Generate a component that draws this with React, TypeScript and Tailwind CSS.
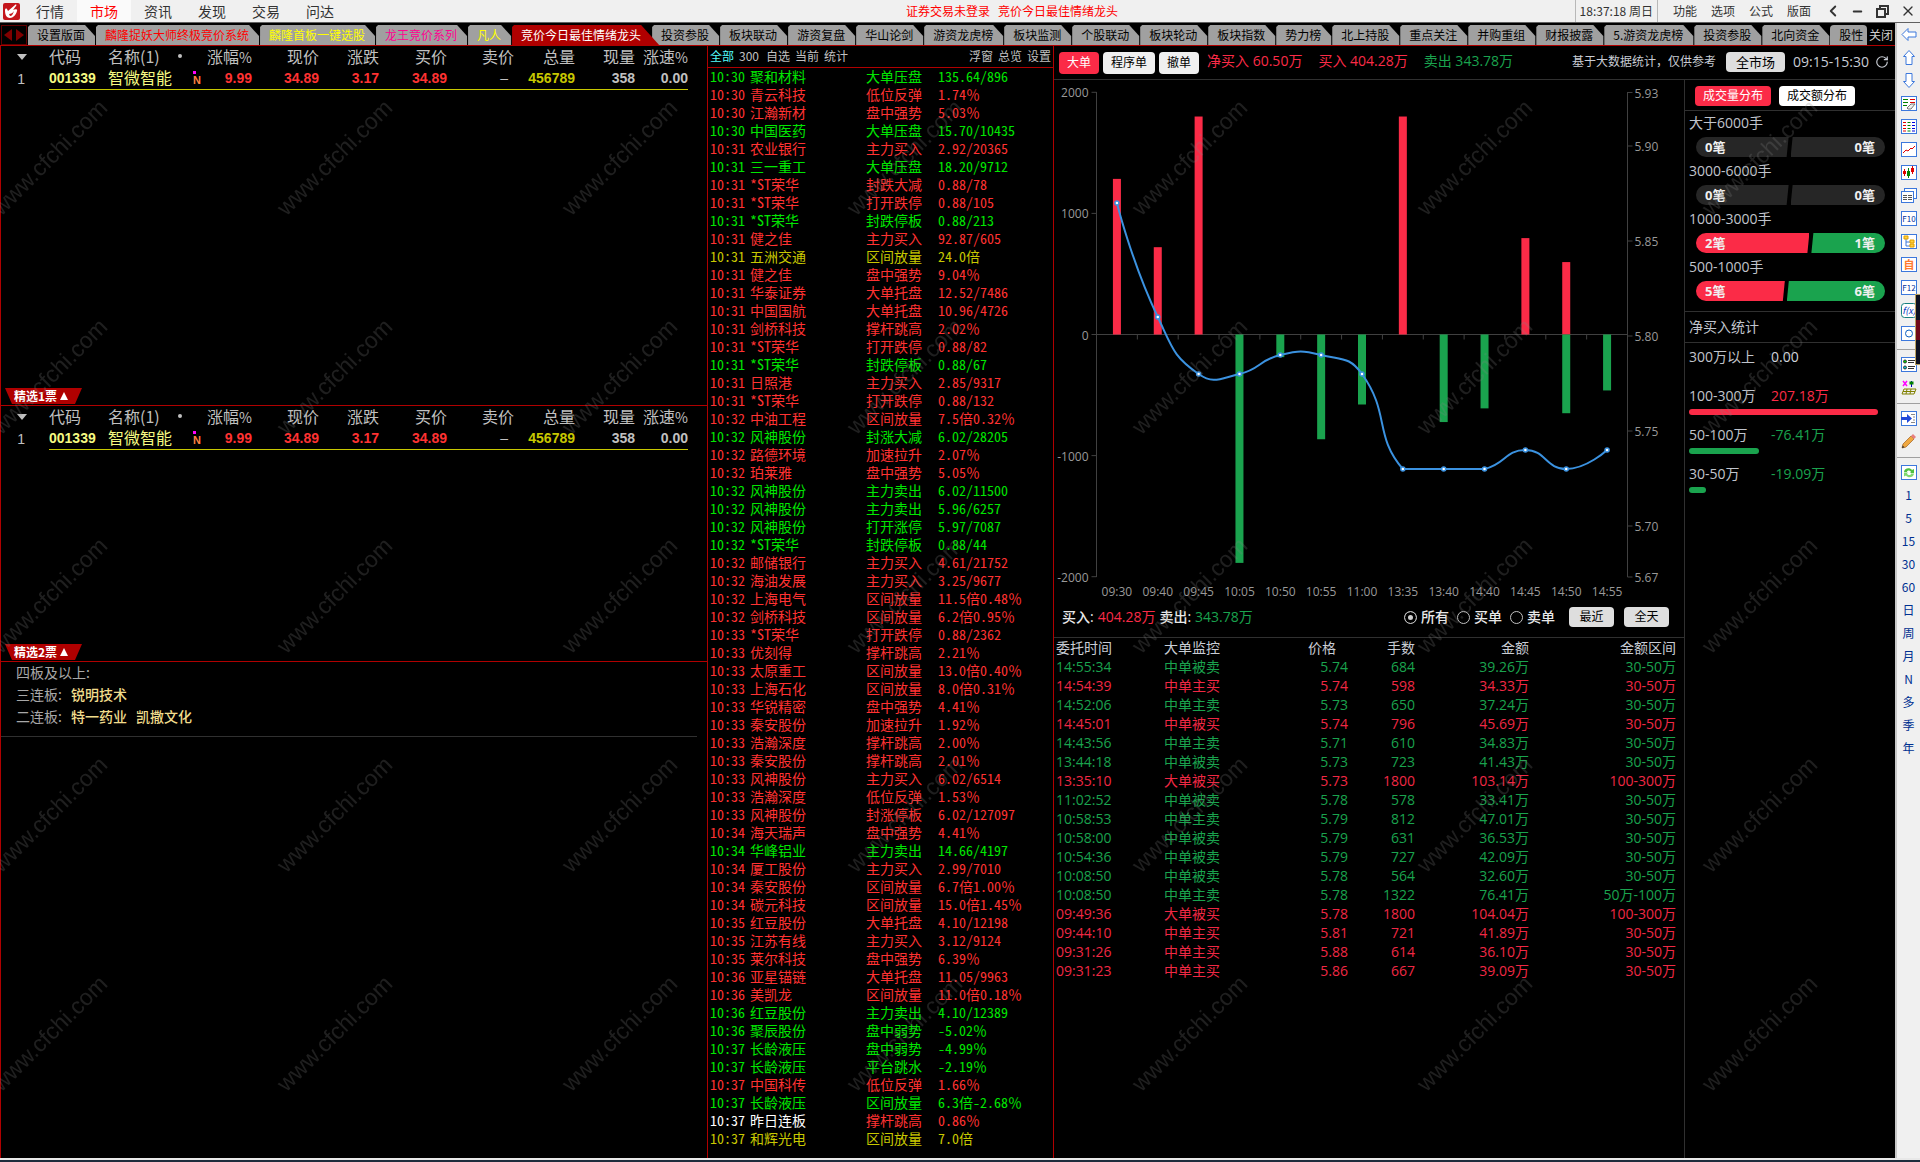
import { useState, type ReactNode } from "react";
import { ChevronLeft, Minus, RotateCw, X } from "lucide-react";

type Tone = "r" | "g" | "y" | "w";
type Alert = [time: string, name: string, kind: string, value: string, tone: Tone];

const menus = ["行情", "市场", "资讯", "发现", "交易", "问达"];
const windowMenus = ["功能", "选项", "公式", "版面"];

const tabs = [
  { label: "设置版面", color: "text-black" },
  { label: "麟隆捉妖大师终极竞价系统", color: "text-[#ff0000]" },
  { label: "麟隆首板一键选股", color: "text-[#ffff00]" },
  { label: "龙王竞价系列", color: "text-[#ff0090]" },
  { label: "凡人", color: "text-[#ffff00]" },
  { label: "竞价今日最佳情绪龙头", color: "text-white", active: true },
  { label: "投资参股", color: "text-black" },
  { label: "板块联动", color: "text-black" },
  { label: "游资复盘", color: "text-black" },
  { label: "华山论剑", color: "text-black" },
  { label: "游资龙虎榜", color: "text-black" },
  { label: "板块监测", color: "text-black" },
  { label: "个股联动", color: "text-black" },
  { label: "板块轮动", color: "text-black" },
  { label: "板块指数", color: "text-black" },
  { label: "势力榜", color: "text-black" },
  { label: "北上持股", color: "text-black" },
  { label: "重点关注", color: "text-black" },
  { label: "并购重组", color: "text-black" },
  { label: "财报披露", color: "text-black" },
  { label: "5.游资龙虎榜", color: "text-black" },
  { label: "投资参股", color: "text-black" },
  { label: "北向资金", color: "text-black" },
];

const alerts: Alert[] = [
  ["10:30", "聚和材料", "大单压盘", "135.64/896", "g"],
  ["10:30", "青云科技", "低位反弹", "1.74％", "r"],
  ["10:30", "江瀚新材", "盘中强势", "5.03％", "r"],
  ["10:30", "中国医药", "大单压盘", "15.70/10435", "g"],
  ["10:31", "农业银行", "主力买入", "2.92/20365", "r"],
  ["10:31", "三一重工", "大单压盘", "18.20/9712", "g"],
  ["10:31", "*ST荣华", "封跌大减", "0.88/78", "r"],
  ["10:31", "*ST荣华", "打开跌停", "0.88/105", "r"],
  ["10:31", "*ST荣华", "封跌停板", "0.88/213", "g"],
  ["10:31", "健之佳", "主力买入", "92.87/605", "r"],
  ["10:31", "五洲交通", "区间放量", "24.0倍", "y"],
  ["10:31", "健之佳", "盘中强势", "9.04％", "r"],
  ["10:31", "华泰证券", "大单托盘", "12.52/7486", "r"],
  ["10:31", "中国国航", "大单托盘", "10.96/4726", "r"],
  ["10:31", "剑桥科技", "撑杆跳高", "2.02％", "r"],
  ["10:31", "*ST荣华", "打开跌停", "0.88/82", "r"],
  ["10:31", "*ST荣华", "封跌停板", "0.88/67", "g"],
  ["10:31", "日照港", "主力买入", "2.85/9317", "r"],
  ["10:31", "*ST荣华", "打开跌停", "0.88/132", "r"],
  ["10:32", "中油工程", "区间放量", "7.5倍0.32％", "r"],
  ["10:32", "风神股份", "封涨大减", "6.02/28205", "g"],
  ["10:32", "路德环境", "加速拉升", "2.07％", "r"],
  ["10:32", "珀莱雅", "盘中强势", "5.05％", "r"],
  ["10:32", "风神股份", "主力卖出", "6.02/11500", "g"],
  ["10:32", "风神股份", "主力卖出", "5.96/6257", "g"],
  ["10:32", "风神股份", "打开涨停", "5.97/7087", "g"],
  ["10:32", "*ST荣华", "封跌停板", "0.88/44", "g"],
  ["10:32", "邮储银行", "主力买入", "4.61/21752", "r"],
  ["10:32", "海油发展", "主力买入", "3.25/9677", "r"],
  ["10:32", "上海电气", "区间放量", "11.5倍0.48％", "r"],
  ["10:32", "剑桥科技", "区间放量", "6.2倍0.95％", "r"],
  ["10:33", "*ST荣华", "打开跌停", "0.88/2362", "r"],
  ["10:33", "优刻得", "撑杆跳高", "2.21％", "r"],
  ["10:33", "太原重工", "区间放量", "13.0倍0.40％", "r"],
  ["10:33", "上海石化", "区间放量", "8.0倍0.31％", "r"],
  ["10:33", "华锐精密", "盘中强势", "4.41％", "r"],
  ["10:33", "秦安股份", "加速拉升", "1.92％", "r"],
  ["10:33", "浩瀚深度", "撑杆跳高", "2.00％", "r"],
  ["10:33", "秦安股份", "撑杆跳高", "2.01％", "r"],
  ["10:33", "风神股份", "主力买入", "6.02/6514", "r"],
  ["10:33", "浩瀚深度", "低位反弹", "1.53％", "r"],
  ["10:33", "风神股份", "封涨停板", "6.02/127097", "r"],
  ["10:34", "海天瑞声", "盘中强势", "4.41％", "r"],
  ["10:34", "华峰铝业", "主力卖出", "14.66/4197", "g"],
  ["10:34", "厦工股份", "主力买入", "2.99/7010", "r"],
  ["10:34", "秦安股份", "区间放量", "6.7倍1.00％", "r"],
  ["10:34", "碳元科技", "区间放量", "15.0倍1.45％", "r"],
  ["10:35", "红豆股份", "大单托盘", "4.10/12198", "r"],
  ["10:35", "江苏有线", "主力买入", "3.12/9124", "r"],
  ["10:35", "莱尔科技", "盘中强势", "6.39％", "r"],
  ["10:36", "亚星锚链", "大单托盘", "11.05/9963", "r"],
  ["10:36", "美凯龙", "区间放量", "11.0倍0.18％", "r"],
  ["10:36", "红豆股份", "主力卖出", "4.10/12389", "g"],
  ["10:36", "聚辰股份", "盘中弱势", "-5.02％", "g"],
  ["10:37", "长龄液压", "盘中弱势", "-4.99％", "g"],
  ["10:37", "长龄液压", "平台跳水", "-2.19％", "g"],
  ["10:37", "中国科传", "低位反弹", "1.66％", "r"],
  ["10:37", "长龄液压", "区间放量", "6.3倍-2.68％", "g"],
  ["10:37", "昨日连板", "撑杆跳高", "0.86％", "w"],
  ["10:37", "和辉光电", "区间放量", "7.0倍", "y"],
];

const toneText: Record<Tone, string> = {
  r: "text-[#ff3232]",
  g: "text-[#00e600]",
  y: "text-[#c8c800]",
  w: "text-white",
};

const orders = [
  ["14:55:34", "中单被卖", "5.74", "684", "39.26万", "30-50万"],
  ["14:54:39", "中单主买", "5.74", "598", "34.33万", "30-50万"],
  ["14:52:06", "中单主卖", "5.73", "650", "37.24万", "30-50万"],
  ["14:45:01", "中单被买", "5.74", "796", "45.69万", "30-50万"],
  ["14:43:56", "中单主卖", "5.71", "610", "34.83万", "30-50万"],
  ["13:44:18", "中单被卖", "5.73", "723", "41.43万", "30-50万"],
  ["13:35:10", "大单被买", "5.73", "1800", "103.14万", "100-300万"],
  ["11:02:52", "中单被卖", "5.78", "578", "33.41万", "30-50万"],
  ["10:58:53", "中单主卖", "5.79", "812", "47.01万", "30-50万"],
  ["10:58:00", "中单被卖", "5.79", "631", "36.53万", "30-50万"],
  ["10:54:36", "中单被卖", "5.79", "727", "42.09万", "30-50万"],
  ["10:08:50", "中单被卖", "5.78", "564", "32.60万", "30-50万"],
  ["10:08:50", "中单主卖", "5.78", "1322", "76.41万", "50万-100万"],
  ["09:49:36", "大单被买", "5.78", "1800", "104.04万", "100-300万"],
  ["09:44:10", "中单主买", "5.81", "721", "41.89万", "30-50万"],
  ["09:31:26", "中单主买", "5.88", "614", "36.10万", "30-50万"],
  ["09:31:23", "中单主买", "5.86", "667", "39.09万", "30-50万"],
];

const ticks = [
  { time: "09:30", buy: 1285, sell: 0, price: 5.87 },
  { time: "09:40", buy: 721, sell: 0, price: 5.81 },
  { time: "09:45", buy: 1800, sell: 0, price: 5.78 },
  { time: "10:05", buy: 0, sell: 1886, price: 5.78 },
  { time: "10:50", buy: 0, sell: 187, price: 5.79 },
  { time: "10:55", buy: 0, sell: 865, price: 5.79 },
  { time: "11:00", buy: 0, sell: 578, price: 5.78 },
  { time: "13:35", buy: 1800, sell: 0, price: 5.73 },
  { time: "13:40", buy: 0, sell: 723, price: 5.73 },
  { time: "14:40", buy: 0, sell: 610, price: 5.73 },
  { time: "14:45", buy: 796, sell: 0, price: 5.74 },
  { time: "14:50", buy: 598, sell: 650, price: 5.73 },
  { time: "14:55", buy: 0, sell: 462, price: 5.74 },
];

const spreads = [
  { label: "大于6000手", buy: "0笔", sell: "0笔", share: 49, empty: true },
  { label: "3000-6000手", buy: "0笔", sell: "0笔", share: 49, empty: true },
  { label: "1000-3000手", buy: "2笔", sell: "1笔", share: 60, empty: false },
  { label: "500-1000手", buy: "5笔", sell: "6笔", share: 47, empty: false },
];

const netBuys = [
  { label: "300万以上", value: "0.00", text: "text-[#d0d4dc]", bar: "", width: 0 },
  { label: "100-300万", value: "207.18万", text: "text-[#fb2b47]", bar: "bg-[#fb2b47]", width: 100 },
  { label: "50-100万", value: "-76.41万", text: "text-[#1aa34e]", bar: "bg-[#1aa34e]", width: 37 },
  { label: "30-50万", value: "-19.09万", text: "text-[#1aa34e]", bar: "bg-[#1aa34e]", width: 9 },
];

function Logo() {
  return (
    <svg viewBox="0 0 17 17" className="mx-[3px] size-[17px] shrink-0">
      <rect width="17" height="17" rx="2" fill="#c4161c" />
      <path d="M2 7c0-1 1-2 2-1l1 2 7-6c1-1 2 0 1 1l-3 4c2-1 5-1 4 1-1 4-4 7-7 7-4 0-5-4-5-8z" fill="#fff" />
      <path d="M6 11c2 0 4-1 5-3-1 3-2 5-4 5z" fill="#c4161c" />
    </svg>
  );
}

function Header() {
  const [current, setCurrent] = useState("市场");

  return (
    <header className="flex h-[23px] items-stretch border-b border-[#606060] bg-[#f0f0f0] text-[#333]">
      <div className="flex flex-1 items-center">
        <Logo />
        <nav className="flex h-full">
          {menus.map((menu) => (
            <button
              key={menu}
              onClick={() => setCurrent(menu)}
              className={`h-full px-[13px] pb-px text-sm leading-5 ${menu === current ? "bg-[#fafafa] text-[#ff0000]" : ""}`}
            >
              {menu}
            </button>
          ))}
        </nav>
      </div>
      <div className="flex items-center gap-2 pl-[104px] text-xs text-[#ff0000]">
        <span>证券交易未登录</span>
        <span>竞价今日最佳情绪龙头</span>
      </div>
      <div className="flex flex-1 items-center justify-end text-xs">
        <span className="flex h-full items-center border-x border-[#b8b8b8] px-1">18:37:18 周日</span>
        <div className="flex pl-2">
          {windowMenus.map((menu) => (
            <button key={menu} className="px-[7px]">
              {menu}
            </button>
          ))}
        </div>
        <button aria-label="收起" className="ml-[2px] flex w-[25px] justify-center">
          <ChevronLeft size={18} strokeWidth={2.5} />
        </button>
        <button aria-label="最小化" className="flex w-[25px] justify-center">
          <Minus size={13} strokeWidth={3.5} />
        </button>
        <button aria-label="还原" className="flex w-[25px] justify-center">
          <svg width="13" height="13" viewBox="0 0 13 13" fill="none" stroke="#333" strokeWidth="2">
            <path d="M4 4V1h8v8H9" />
            <rect x="1" y="4" width="8" height="8" />
          </svg>
        </button>
        <button aria-label="关闭窗口" className="flex w-[25px] justify-center">
          <X size={16} strokeWidth={2} />
        </button>
      </div>
    </header>
  );
}

function TabBar() {
  return (
    <div className="flex h-[23px] items-end overflow-hidden border-b border-[#b00000] text-xs">
      <div className="mr-px ml-px flex h-5 w-[26px] shrink-0 items-center justify-center gap-1 border border-[#600000]">
        <button aria-label="向左" className="size-0 border-y-[6px] border-r-8 border-y-transparent border-r-[#800000]" />
        <button aria-label="向右" className="size-0 border-y-[6px] border-l-8 border-y-transparent border-l-[#800000]" />
      </div>
      {tabs.map((tab, index) => (
        <button
          key={index}
          className={`h-5 shrink-0 pb-px pl-[9px] leading-4 whitespace-nowrap ${tab.color} ${
            tab.active
              ? "relative z-10 -mr-[7px] bg-[#b00000] pr-[18px] [clip-path:polygon(0_2px,2px_0,calc(100%-18px)_0,100%_100%,0_100%)]"
              : "bg-[#a0a0a0] pr-[11px] [clip-path:polygon(0_2px,2px_0,calc(100%-11px)_0,calc(100%-1px)_11px,calc(100%-1px)_100%,0_100%)]"
          }`}
        >
          {tab.label}
        </button>
      ))}
      <button className="h-5 min-w-0 flex-1 overflow-hidden rounded-t-sm bg-[#a0a0a0] pb-px pl-[9px] text-left leading-4 whitespace-nowrap text-black">
        股性
      </button>
      <button className="h-5 shrink-0 px-[2px] pb-px leading-4 text-[#d0d0d0]">关闭</button>
    </div>
  );
}

function QuoteTable() {
  return (
    <table className="w-full table-fixed text-right text-base text-[#c0c0c0]">
      <colgroup>
        <col className="w-12" />
        <col className="w-[59px]" />
        <col className="w-[66px]" />
        <col className="w-[30px]" />
        <col className="w-12" />
        <col className="w-[67px]" />
        <col className="w-[60px]" />
        <col className="w-[68px]" />
        <col className="w-[67px]" />
        <col className="w-[61px]" />
        <col className="w-[60px]" />
        <col className="w-[53px]" />
        <col />
      </colgroup>
      <thead>
        <tr className="h-[22px] leading-5 whitespace-nowrap [&>th]:align-top [&>th]:font-normal">
          <th>
            <span className="mt-2 mr-[22px] ml-auto block size-0 border-x-[5px] border-t-[6px] border-x-transparent border-t-[#c0c0c0]" />
          </th>
          <th className="text-left">代码</th>
          <th className="text-left">名称(1)</th>
          <th className="text-left">
            <span className="mt-2 ml-1 block size-1 rounded-full bg-[#c0c0c0]" />
          </th>
          <th>涨幅<span className="text-sm">%</span></th>
          <th>现价</th>
          <th>涨跌</th>
          <th>买价</th>
          <th>卖价</th>
          <th>总量</th>
          <th>现量</th>
          <th>涨速<span className="text-sm">%</span></th>
          <th />
        </tr>
      </thead>
      <tbody>
        <tr className="h-[21px] font-['Liberation_Sans',sans-serif] text-sm leading-5 font-bold [&>td]:py-0 [&>td+td]:border-b [&>td+td]:border-[#c8c800]">
          <td className="pr-6 font-normal">1</td>
          <td className="text-left text-[#f5fa82]">001339</td>
          <td className="text-left align-top font-['Noto_Sans_CJK_SC',sans-serif] text-base leading-[18px] font-normal whitespace-nowrap text-[#f5fa82]">
            智微智能
          </td>
          <td className="pr-[3px]">
            <span className="ml-[19px] block size-[3px] bg-[#ff00ff]" />
            <span className="block text-[11px] leading-3 text-[#ff8040]">N</span>
          </td>
          <td className="text-[#ff3232]">9.99</td>
          <td className="text-[#ff3232]">34.89</td>
          <td className="text-[#ff3232]">3.17</td>
          <td className="text-[#ff3232]">34.89</td>
          <td className="pr-[6px] font-normal">–</td>
          <td className="text-[#c8c800]">456789</td>
          <td>358</td>
          <td>0.00</td>
          <td className="border-none!" />
        </tr>
      </tbody>
    </table>
  );
}

function PanelTag({ children }: { children: ReactNode }) {
  return (
    <div className="mt-auto border-b border-[#b00000] pb-px pl-1">
      <button className="block h-4 w-[77px] bg-[#b00000] text-left text-xs leading-4 font-bold text-white [clip-path:polygon(0_0,100%_0,calc(100%-7px)_100%,7px_100%)]">
        <span className="flex items-center gap-[3px] pl-[9px]">
          {children}
          <span className="size-0 border-x-[4px] border-b-[8px] border-x-transparent border-b-white" />
        </span>
      </button>
    </div>
  );
}

function LeftPanel() {
  return (
    <section className="grid min-w-0 grid-rows-[360fr_256fr_496fr] border-x border-[#b00000]">
      <div className="flex flex-col">
        <QuoteTable />
        <PanelTag>精选1票</PanelTag>
      </div>
      <div className="flex flex-col">
        <QuoteTable />
        <PanelTag>精选2票</PanelTag>
      </div>
      <div>
        <dl className="mr-[10px] border-b border-[#303030] pb-[9px] pl-[15px] text-sm leading-[22px] text-[#a8a8a8]">
          <dt className="-mt-px">四板及以上:</dt>
          <div className="flex gap-[9px]">
            <dt>三连板:</dt>
            <dd className="font-medium text-[#f0dc8c]">锐明技术</dd>
          </div>
          <div className="flex gap-[9px]">
            <dt>二连板:</dt>
            <dd className="font-medium text-[#f0dc8c]">特一药业</dd>
            <dd className="font-medium text-[#f0dc8c]">凯撒文化</dd>
          </div>
        </dl>
      </div>
    </section>
  );
}

// The percent sign keeps its full width while the digits are half width
function AlertValue({ value }: { value: string }) {
  if (!value.endsWith("％")) return value;
  return (
    <>
      {value.slice(0, -1)}
      <span className="[font-feature-settings:normal]">％</span>
    </>
  );
}

function AlertPanel() {
  return (
    <section className="min-w-0 border-r border-[#b00000]">
      <div className="flex h-[22px] items-center justify-between border-b border-[#b00000] pr-[2px] pb-px pl-[2px] text-xs text-[#c0c0c0]">
        <div className="flex gap-[5px]">
          <button className="text-[#54fcfc]">全部</button>
          <span className="pr-[2px]">300</span>
          <button>自选</button>
          <button>当前</button>
          <button>统计</button>
        </div>
        <div className="flex gap-[5px]">
          <button>浮窗</button>
          <button>总览</button>
          <button>设置</button>
        </div>
      </div>
      <table className="w-full table-fixed text-left text-sm [font-feature-settings:'hwid']">
        <colgroup>
          <col className="w-[42px]" />
          <col className="w-[116px]" />
          <col className="w-[72px]" />
          <col />
        </colgroup>
        <tbody>
          {alerts.map(([time, name, kind, value, tone], index) => (
            <tr key={index} className={`h-[18px] leading-4 whitespace-nowrap [&>td]:align-top ${toneText[tone]}`}>
              <td className="pl-[2px]">{time}</td>
              <td>{name}</td>
              <td className={tone === "w" ? "text-[#ff3232]" : ""}>{kind}</td>
              <td className={tone === "w" ? "text-[#ff3232]" : ""}>
                <AlertValue value={value} />
              </td>
            </tr>
          ))}
        </tbody>
      </table>
    </section>
  );
}

type Point = { x: number; y: number };

// Bezier spline, control points stay between the highest and the lowest point
function smoothPath(points: Point[]) {
  const top = Math.min(...points.map((p) => p.y));
  const bottom = Math.max(...points.map((p) => p.y));
  const limit = (y: number) => Math.min(Math.max(y, top), bottom);

  let d = `M${points[0].x} ${points[0].y}`;
  let from = points[0];
  for (let i = 1; i < points.length; i++) {
    const p = points[i];
    const prev = points[i - 1];
    const next = points[i + 1];
    let before = p;
    let after = p;
    if (next) {
      const lenPrev = Math.hypot(p.x - prev.x, p.y - prev.y);
      const lenNext = Math.hypot(next.x - p.x, next.y - p.y);
      const ratio = lenNext / (lenNext + lenPrev);
      const vx = (next.x - prev.x) * 0.5;
      const vy = (next.y - prev.y) * 0.5;
      before = { x: p.x - vx * (1 - ratio), y: limit(p.y - vy * (1 - ratio)) };
      after = { x: p.x + vx * ratio, y: limit(p.y + vy * ratio) };
    }
    d += `C${from.x} ${from.y} ${before.x} ${before.y} ${p.x} ${p.y}`;
    from = after;
  }
  return d;
}

function OrderChart() {
  const left = 42.5;
  const right = 573.5;
  const step = (right - left) / ticks.length;
  const zero = 254.5;
  const volumeY = (v: number) => zero - v * 0.1211;
  const priceY = (p: number) => 256 + (5.8 - p) * 1900;
  const centre = (i: number) => left + step * (i + 0.5);
  const points = ticks.map((t, i) => ({ x: centre(i), y: priceY(t.price) }));
  const prices: [string, number][] = [
    ["5.93", 12.5],
    ["5.90", priceY(5.9)],
    ["5.85", priceY(5.85)],
    ["5.80", priceY(5.8)],
    ["5.75", priceY(5.75)],
    ["5.70", priceY(5.7)],
    ["5.67", 497],
  ];

  return (
    <svg viewBox="0 0 630 526" className="block w-full font-['Open_Sans','Noto_Sans_CJK_SC',sans-serif] text-xs">
      <g stroke="#404040" fill="none">
        <path d={`M${left} 12V497M${right} 12V497M${left} ${zero}H${right}`} />
        {[2000, 1000, 0, -1000, -2000].map((v) => (
          <path key={v} d={`M${left - 5} ${volumeY(v)}H${left}`} />
        ))}
        {prices.map(([label, y]) => (
          <path key={label} d={`M${right} ${y}h5`} />
        ))}
        {ticks.slice(1).map((t, i) => (
          <path key={t.time} d={`M${left + step * (i + 1)} ${zero}v5`} />
        ))}
      </g>
      <g fill="#999">
        {[2000, 1000, 0, -1000, -2000].map((v) => (
          <text key={v} x={left - 8} y={volumeY(v) + 5} textAnchor="end">
            {v}
          </text>
        ))}
        {prices.map(([label, y]) => (
          <text key={label} x={right + 7} y={y + 5}>
            {label}
          </text>
        ))}
        {ticks.map((t, i) => (
          <text key={t.time} x={centre(i)} y={516} textAnchor="middle">
            {t.time}
          </text>
        ))}
      </g>
      {ticks.map((t, i) => (
        <g key={t.time}>
          {t.buy > 0 && <rect x={centre(i) - 4} y={volumeY(t.buy)} width="8" height={zero - volumeY(t.buy)} fill="#fb2b47" />}
          {t.sell > 0 && <rect x={centre(i) - 4} y={zero} width="8" height={volumeY(-t.sell) - zero} fill="#1aa34e" />}
        </g>
      ))}
      <path d={smoothPath(points)} fill="none" stroke="#3b92e0" strokeWidth="2" />
      {points.map((p, i) => (
        <circle key={i} cx={p.x} cy={p.y} r="2" fill="#fff" stroke="#3b92e0" strokeWidth="1.5" />
      ))}
    </svg>
  );
}

function OrderFilter() {
  const [side, setSide] = useState("所有");

  return (
    <div className="flex items-center justify-between border-b border-[#303030] pt-px pr-[15px] pb-[10px] pl-2 text-sm leading-5">
      <div className="flex gap-1">
        <span className="font-medium text-[#e8e8e8]">买入:</span>
        <span className="text-[#fb2b47]">404.28万</span>
        <span className="font-medium text-[#e8e8e8]">卖出:</span>
        <span className="text-[#1aa34e]">343.78万</span>
      </div>
      <div className="flex items-center">
        {["所有", "买单", "卖单"].map((name) => (
          <label key={name} className="mr-2 flex items-center gap-1 font-medium text-[#e8e8e8]">
            <input
              type="radio"
              name="side"
              checked={side === name}
              onChange={() => setSide(name)}
              className="size-[13px] appearance-none rounded-full border border-[#c0c0c0] checked:bg-[#d0d0d0] checked:shadow-[inset_0_0_0_3px_#000]"
            />
            {name}
          </label>
        ))}
        <button className="ml-[6px] h-5 w-[45px] rounded bg-[#dedede] text-xs text-black">最近</button>
        <button className="ml-[10px] h-5 w-[45px] rounded bg-[#dedede] text-xs text-black">全天</button>
      </div>
    </div>
  );
}

function OrderTable() {
  return (
    <table className="w-full table-fixed text-right text-sm">
      <colgroup>
        <col className="w-[110px]" />
        <col className="w-[110px]" />
        <col className="w-[74px]" />
        <col className="w-[67px]" />
        <col className="w-[114px]" />
        <col />
      </colgroup>
      <thead>
        <tr className="h-[19px] leading-[19px] text-[#c8ccd4] [&>th]:font-normal">
          <th className="pl-[2px] text-left">委托时间</th>
          <th className="text-left">大单监控</th>
          <th className="pr-3">价格</th>
          <th>手数</th>
          <th>金额</th>
          <th className="pr-2">金额区间</th>
        </tr>
      </thead>
      <tbody>
        {orders.map((order, index) => (
          <tr
            key={index}
            className={`h-[19px] leading-[19px] whitespace-nowrap ${order[1].endsWith("买") ? "text-[#f02844]" : "text-[#1aa34e]"}`}
          >
            <td className="pl-[2px] text-left">{order[0]}</td>
            <td className="text-left">{order[1]}</td>
            <td>{order[2]}</td>
            <td>{order[3]}</td>
            <td>{order[4]}</td>
            <td className="pr-2">{order[5]}</td>
          </tr>
        ))}
      </tbody>
    </table>
  );
}

function StatsPanel() {
  return (
    <aside className="border-l border-[#303030] text-sm text-[#c0c4cc]">
      <div className="flex gap-2 border-b border-[#303030] px-[10px] pt-[6px] pb-1">
        <button className="h-5 rounded bg-[#fb2b47] px-2 text-xs text-white">成交量分布</button>
        <button className="h-5 rounded bg-white px-2 text-xs text-black">成交额分布</button>
      </div>
      <div className="border-b border-[#303030] pb-2">
        {spreads.map((row) => (
          <div key={row.label} className="h-12">
            <div className="pt-[2px] pl-1 leading-5">{row.label}</div>
            <div className="mt-1 mr-[10px] ml-[11px] flex h-5 overflow-hidden rounded-full text-[13px] leading-5 font-bold text-[#f0f0f0]">
              <div
                className={`pl-[9px] [clip-path:polygon(0_0,100%_0,calc(100%-2px)_100%,0_100%)] ${row.empty ? "bg-[#262626]" : "bg-[#fb2b47]"}`}
                style={{ width: `${row.share}%` }}
              >
                {row.buy}
              </div>
              <div
                className={`ml-[2px] flex-1 pr-[10px] text-right [clip-path:polygon(2px_0,100%_0,100%_100%,0_100%)] ${row.empty ? "bg-[#262626]" : "bg-[#1aa34e]"}`}
              >
                {row.sell}
              </div>
            </div>
          </div>
        ))}
      </div>
      <h2 className="h-[31px] border-b border-[#303030] pl-1 leading-[30px]">净买入统计</h2>
      {netBuys.map((row) => (
        <div key={row.label} className="h-[39px] pr-[17px] pl-1">
          <div className="flex leading-[27px]">
            <span className="w-[82px]">{row.label}</span>
            <span className={row.text}>{row.value}</span>
          </div>
          <div className={`h-[6px] rounded-full ${row.bar}`} style={{ width: `${row.width}%` }} />
        </div>
      ))}
    </aside>
  );
}

function BigOrderPanel() {
  return (
    <section className="flex min-w-0 flex-col font-['Open_Sans','Noto_Sans_CJK_SC',sans-serif]">
      <div className="flex h-[34px] items-center justify-between border-b border-[#303030] pr-[6px] pl-[5px] whitespace-nowrap">
        <div className="flex items-center gap-1 text-xs text-black">
          <button className="h-[22px] rounded bg-[#fb2b47] px-2 text-white">大单</button>
          <button className="h-[22px] rounded bg-[#f0f0f0] px-2">程序单</button>
          <button className="h-[22px] rounded bg-[#f0f0f0] px-2">撤单</button>
          <div className="flex gap-4 pb-[3px] pl-1 text-sm leading-5">
            <span className="text-[#fb2b47]">净买入 60.50万</span>
            <span className="text-[#fb2b47]">买入 404.28万</span>
            <span className="text-[#1aa34e]">卖出 343.78万</span>
          </div>
        </div>
        <div className="flex items-center pb-px text-xs text-[#c8ccd4]">
          <span>基于大数据统计，仅供参考</span>
          <button className="ml-[10px] h-5 rounded bg-[#dedede] px-[10px] text-[13px] leading-5 text-black">全市场</button>
          <span className="ml-2 text-sm leading-5">09:15-15:30</span>
          <button aria-label="刷新" className="ml-[6px]">
            <RotateCw size={14} strokeWidth={2} />
          </button>
        </div>
      </div>
      <div className="grid flex-1 grid-cols-[630fr_211fr]">
        <div className="min-w-0">
          <OrderChart />
          <OrderFilter />
          <OrderTable />
        </div>
        <StatsPanel />
      </div>
    </section>
  );
}

function Framed({ children }: { children?: ReactNode }) {
  return (
    <>
      <rect x=".5" y=".5" width="15" height="14" fill="#fff" stroke="#3c78dc" />
      {children}
    </>
  );
}

const toolGroups: { name: string; art: ReactNode }[][] = [
  [
    { name: "后退", art: <path d="M1 7.500 7 1.500V5h8v5H7v3.500z" fill="#fff" stroke="#3c78dc" /> },
    { name: "上移", art: <path d="M8 0.500 13.500 6.500H11v8H5v-8H2.500z" fill="#fff" stroke="#3c78dc" /> },
    { name: "下移", art: <path d="M8 14.500 13.500 8.500H11v-8H5v8H2.500z" fill="#fff" stroke="#3c78dc" /> },
    {
      name: "自选报价",
      art: (
        <Framed>
          <path d="M2 3.500h5M2 6.500h5M2 9.500h4" stroke="#008000" />
          <path d="M9 3.500h5M9 6.500h5" stroke="#e00000" />
          <path d="M6 12l4-4h4l-4 5H7z" fill="#eee" stroke="#777" />
        </Framed>
      ),
    },
    {
      name: "报价列表",
      art: (
        <Framed>
          <path d="M2 3.500h3M2 6.500h3M2 9.500h3M2 12h3" stroke="#e00000" />
          <path d="M6.500 3.500h3M6.500 6.500h3M6.500 9.500h3M6.500 12h3" stroke="#008000" />
          <path d="M11 3.500h3M11 6.500h3M11 9.500h3M11 12h3" stroke="#0000e0" />
        </Framed>
      ),
    },
    { name: "分时", art: <Framed><path d="M2 11l3-3 2 1 3-3 1 1 3-3" fill="none" stroke="#e00000" /></Framed> },
    {
      name: "K线",
      art: (
        <Framed>
          <path d="M3.500 4v7M11.500 1v8" stroke="#e00000" />
          <path d="M2 6h3v3H2zM10 3h3v4h-3z" fill="#e00000" />
          <path d="M7.500 3v10" stroke="#008000" />
          <path d="M6 6h3v5H6z" fill="#008000" />
        </Framed>
      ),
    },
    {
      name: "多窗口",
      art: (
        <>
          <rect x="3.500" y=".5" width="12" height="10" fill="#fff" stroke="#3c78dc" />
          <rect x=".5" y="3.500" width="12" height="11" fill="#fff" stroke="#3c78dc" />
          <path d="M2 7.500h4M7 7.500h4M2 9.500h4M7 9.500h4M2 11.500h4M7 11.500h4" stroke="#555" />
        </>
      ),
    },
    { name: "基本资料", art: <Framed><text x="8" y="11" textAnchor="middle" fontSize="8" fill="#0030a0">F10</text></Framed> },
    {
      name: "板块树",
      art: (
        <Framed>
          <path d="M5 5v7h4M5 8h4" fill="none" stroke="#3c78dc" />
          <path d="M3 2h4v3H3zM9 6h4v3H9zM9 10h4v3H9z" fill="#ffd040" stroke="#e0a000" />
        </Framed>
      ),
    },
    { name: "自选股", art: <Framed><text x="8" y="12" textAnchor="middle" fontSize="11" fontWeight="700" fill="#ff7a30">自</text></Framed> },
    { name: "诊断", art: <Framed><text x="8" y="11" textAnchor="middle" fontSize="8" fill="#0030a0">F12</text></Framed> },
    {
      name: "公式",
      art: (
        <>
          <rect x=".5" y=".5" width="15" height="14" rx="3" fill="#fff" stroke="#188080" />
          <text x="8" y="11" textAnchor="middle" fontSize="9" fontStyle="italic" fill="#0030c0">f(x)</text>
        </>
      ),
    },
    { name: "画圈", art: <Framed><circle cx="8" cy="7.500" r="3.500" fill="none" stroke="#1060c0" /></Framed> },
  ],
  [
    {
      name: "选项列表",
      art: (
        <Framed>
          <path d="M7 3.500h7M7 5.500h6M7 9.500h7M7 11.500h6" stroke="#333" />
          <circle cx="4" cy="4.500" r="1.500" fill="#00d000" stroke="#333" />
          <circle cx="4" cy="10.500" r="1.500" fill="#00c0d0" stroke="#333" />
        </Framed>
      ),
    },
    {
      name: "筹码",
      art: (
        <>
          <path d="M2 1l4 5M6 1L2 6" stroke="#ff00ff" strokeWidth="1.500" />
          <path d="M10.500 1v6" stroke="#0000c0" />
          <path d="M8.500 3h4" stroke="#008000" strokeWidth="3" />
          <path d="M3 9h12l-2 5H1zM2 11.500h12M6 9l-1 5M10 9l-1 5" fill="none" stroke="#808000" />
        </>
      ),
    },
  ],
  [
    {
      name: "导入",
      art: (
        <Framed>
          <path d="M0 6h6V3l5 4.500-5 4.500V9H0z" fill="#2048d8" />
          <path d="M10 3.500h4M12 6h2M12 9h2M10 11.500h4" stroke="#888" />
        </Framed>
      ),
    },
    {
      name: "画线",
      art: (
        <>
          <path d="M1 14l1-4 8-8 3 3-8 8z" fill="#f0a840" stroke="#a06020" strokeWidth=".7" />
          <path d="M10 2l2-2 3 3-2 2z" fill="#e88080" />
          <path d="M1 14l.7-2.500 1.800 1.800z" fill="#333" />
        </>
      ),
    },
  ],
  [
    {
      name: "刷新行情",
      art: (
        <Framed>
          <path d="M3 7c0-4 6-5 8-2l2-1v4H9l1-1C9 5 6 5 6 7z" fill="#50c040" />
          <path d="M13 8.500c0 4-6 5-8 2l-2 1v-4h4l-1 1c1 2 4 2 4 0z" fill="#80d870" />
        </Framed>
      ),
    },
  ],
];

const periods = ["1", "5", "15", "30", "60", "日", "周", "月", "N", "多", "季", "年"];

function ToolBar() {
  return (
    <aside className="relative w-[25px] shrink-0 border-l-2 border-[#c8c8c8] bg-[#f0f0f0] text-center text-[#003090]">
      {toolGroups.map((group, index) => (
        <div key={index} className={index > 0 ? "border-t border-[#a0a0a0] pt-[3px]" : ""}>
          <div className={index < toolGroups.length - 1 ? "pb-1" : ""}>
            {group.map((tool) => (
              <button key={tool.name} aria-label={tool.name} className="flex h-[23px] w-full items-center justify-center">
                <svg width="16" height="15" viewBox="0 0 16 15" fill="none">
                  {tool.art}
                </svg>
              </button>
            ))}
          </div>
        </div>
      ))}
      {periods.map((period) => (
        <button key={period} className="block h-[23px] w-full pb-[2px] text-xs">
          {period}
        </button>
      ))}
      {/* docked side window peeking in at the edge */}
      <div className="absolute top-[271px] right-0 flex h-[71px] w-[5px] items-center border border-r-0 border-[#b8a060] bg-[#0c1020]">
        <div className="h-5 w-full bg-[#700818]" />
      </div>
    </aside>
  );
}

function Watermark() {
  return (
    <svg className="pointer-events-none absolute inset-0 size-full">
      <defs>
        <pattern id="mark" x="-92" y="48" width="285" height="219" patternUnits="userSpaceOnUse">
          <text
            x="142"
            y="117"
            textAnchor="middle"
            transform="rotate(-45 142 110)"
            fontSize="23"
            fill="#808080"
            fillOpacity=".24"
            className="font-['Liberation_Sans',sans-serif]"
          >
            www.cfchi.com
          </text>
        </pattern>
      </defs>
      <rect width="100%" height="100%" fill="url(#mark)" />
    </svg>
  );
}

export default function App() {
  return (
    <div className="relative flex min-h-screen flex-col bg-black font-['Noto_Sans_CJK_SC',sans-serif]">
      <Header />
      <div className="flex flex-1">
        <main className="flex min-w-0 flex-1 flex-col">
          <TabBar />
          <div className="grid flex-1 grid-cols-[708fr_346fr_841fr]">
            <LeftPanel />
            <AlertPanel />
            <BigOrderPanel />
          </div>
        </main>
        <ToolBar />
      </div>
      <footer className="h-1 border-t-2 border-[#e8e8e8] bg-[#1e2c3c]" />
      <Watermark />
    </div>
  );
}
